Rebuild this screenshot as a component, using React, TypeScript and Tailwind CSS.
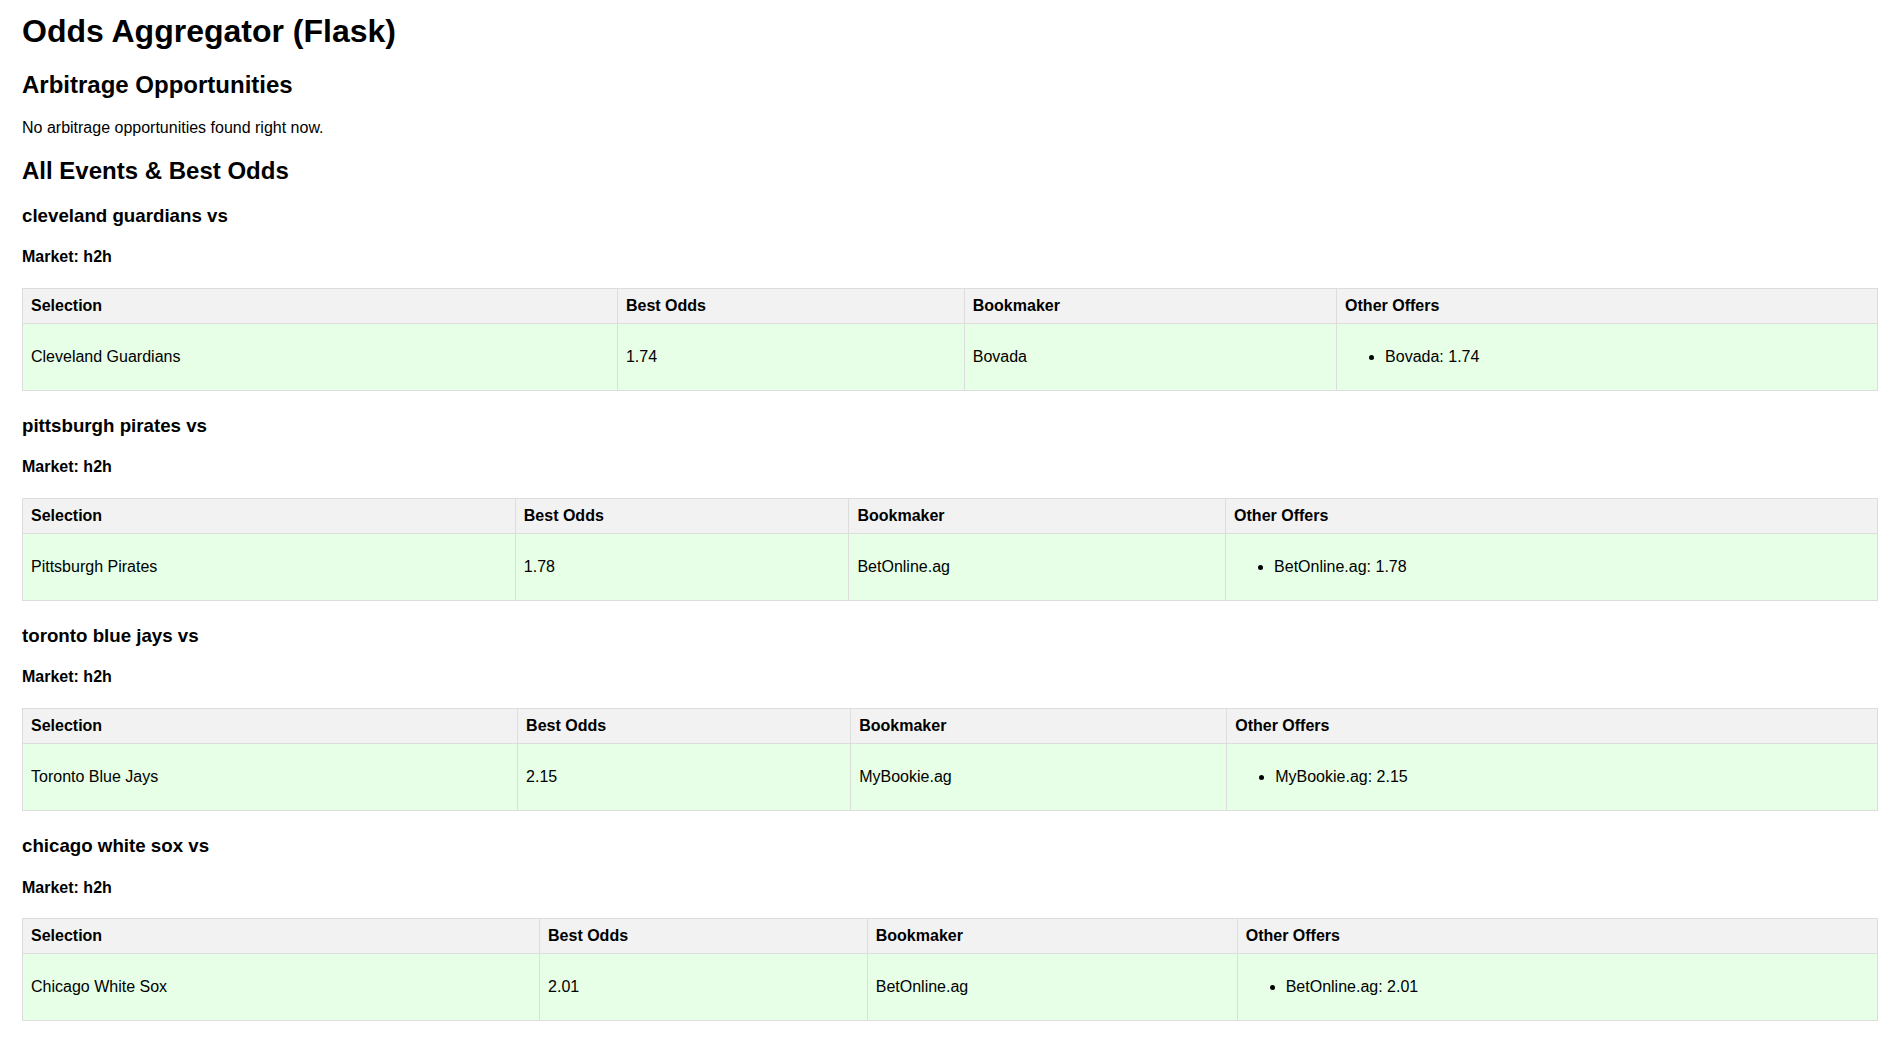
import React from "react";

type Offer = { book: string; odds: string };

type Event = {
  title: string;
  market: string;
  selection: string;
  bestOdds: string;
  bookmaker: string;
  offers: Offer[];
};

const events: Event[] = [
  {
    title: "cleveland guardians vs",
    market: "h2h",
    selection: "Cleveland Guardians",
    bestOdds: "1.74",
    bookmaker: "Bovada",
    offers: [{ book: "Bovada", odds: "1.74" }],
  },
  {
    title: "pittsburgh pirates vs",
    market: "h2h",
    selection: "Pittsburgh Pirates",
    bestOdds: "1.78",
    bookmaker: "BetOnline.ag",
    offers: [{ book: "BetOnline.ag", odds: "1.78" }],
  },
  {
    title: "toronto blue jays vs",
    market: "h2h",
    selection: "Toronto Blue Jays",
    bestOdds: "2.15",
    bookmaker: "MyBookie.ag",
    offers: [{ book: "MyBookie.ag", odds: "2.15" }],
  },
  {
    title: "chicago white sox vs",
    market: "h2h",
    selection: "Chicago White Sox",
    bestOdds: "2.01",
    bookmaker: "BetOnline.ag",
    offers: [{ book: "BetOnline.ag", odds: "2.01" }],
  },
  {
    title: "detroit tigers vs",
    market: "h2h",
    selection: "Detroit Tigers",
    bestOdds: "1.95",
    bookmaker: "Bovada",
    offers: [{ book: "Bovada", odds: "1.95" }],
  },
];

function EventBlock({ ev }: { ev: Event }) {
  return (
    <div>
      <h3 className="text-[18.72px] font-bold my-[18.72px]">{ev.title}</h3>
      <h4 className="text-[16px] font-bold my-[21.28px]">Market: {ev.market}</h4>
      <table className="w-full border-collapse mb-[24.5px] text-[16px]">
        <thead>
          <tr className="bg-[#f2f2f2]">
            <th className="border border-[#ddd] p-2 text-left font-bold">Selection</th>
            <th className="border border-[#ddd] p-2 text-left font-bold">Best Odds</th>
            <th className="border border-[#ddd] p-2 text-left font-bold">Bookmaker</th>
            <th className="border border-[#ddd] p-2 text-left font-bold">Other Offers</th>
          </tr>
        </thead>
        <tbody>
          <tr className="bg-[#e6ffe6]">
            <td className="border border-[#ddd] p-2">{ev.selection}</td>
            <td className="border border-[#ddd] p-2">{ev.bestOdds}</td>
            <td className="border border-[#ddd] p-2">{ev.bookmaker}</td>
            <td className="border border-[#ddd] p-2">
              <ul className="list-disc my-4 pl-10">
                {ev.offers.map((o) => (
                  <li key={o.book}>
                    {o.book}: {o.odds}
                  </li>
                ))}
              </ul>
            </td>
          </tr>
        </tbody>
      </table>
    </div>
  );
}

export default function App() {
  return (
    <div className="font-['Liberation_Sans',Arial,sans-serif] text-black bg-white leading-[normal] pl-[22px] pr-[10px] pt-[13px] min-h-screen">
      <h1 className="text-[32px] font-bold mb-[21.44px]">Odds Aggregator (Flask)</h1>

      <h2 className="text-[24px] font-bold my-[19.92px]">Arbitrage Opportunities</h2>
      <p className="text-[16px] my-4">No arbitrage opportunities found right now.</p>

      <h2 className="text-[24px] font-bold my-[19.92px]">All Events &amp; Best Odds</h2>

      {events.map((ev) => (
        <EventBlock key={ev.title} ev={ev} />
      ))}
    </div>
  );
}
